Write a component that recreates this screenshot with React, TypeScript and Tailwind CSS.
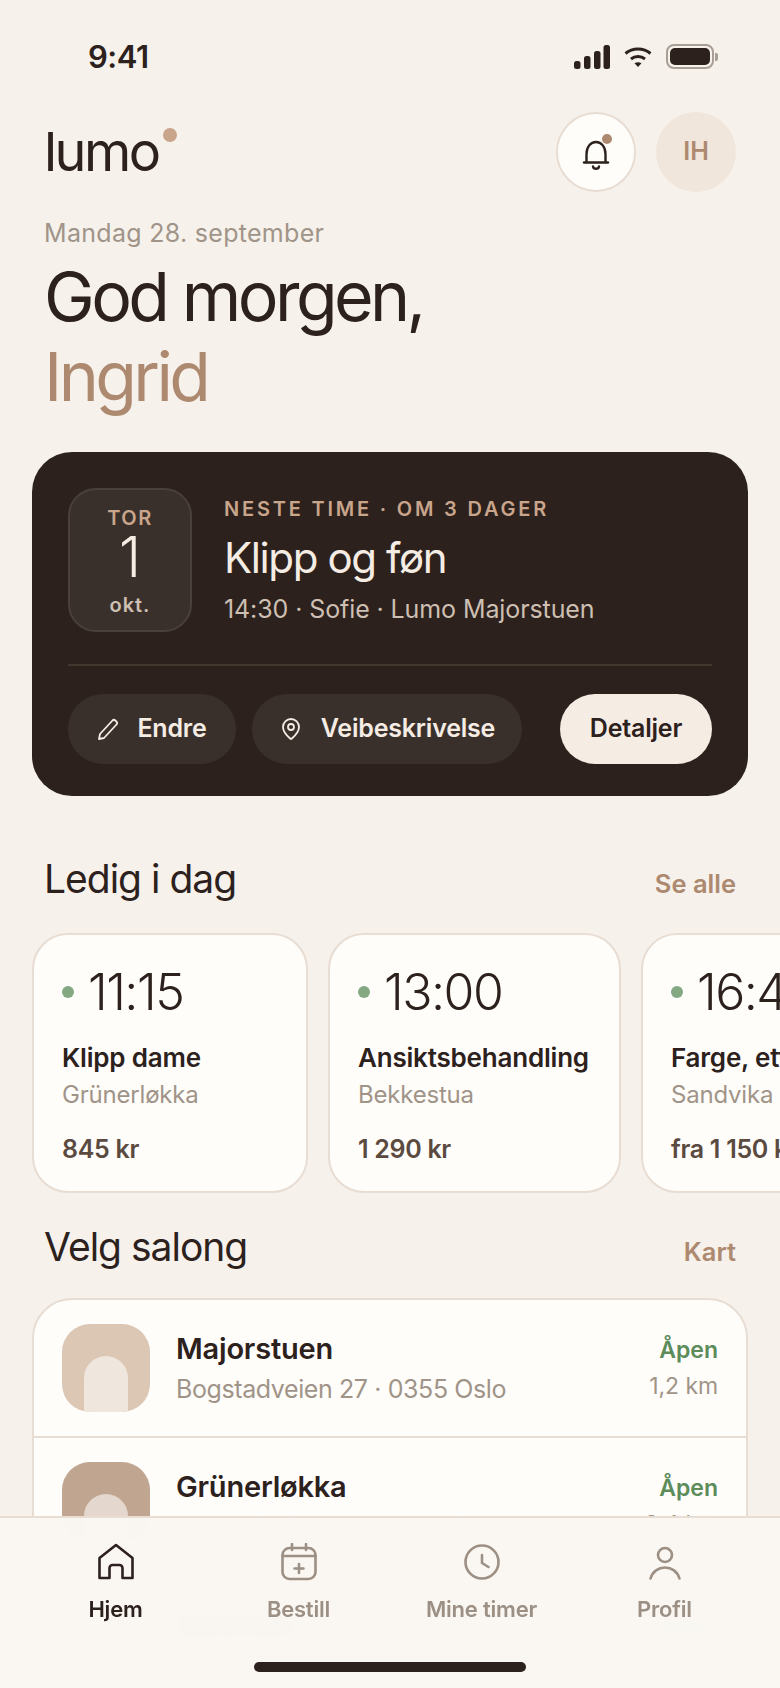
import { MapPin } from "lucide-react";

const slots = [
  { time: "11:15", name: "Klipp dame", place: "Grünerløkka", price: "845 kr", width: "w-[276px]" },
  { time: "13:00", name: "Ansiktsbehandling", place: "Bekkestua", price: "1 290 kr", width: "w-[293px]" },
  { time: "16:45", name: "Farge, etter avtale", place: "Sandvika", price: "fra 1 150 kr", width: "w-[292px]" },
];

const salons = [
  { name: "Majorstuen", address: "Bogstadveien 27 · 0355 Oslo", km: "1,2 km", thumb: "bg-[#dcc6b4]", arch: "bg-[#efe6de]" },
  { name: "Grünerløkka", address: "Thorvald Meyers gate 58", km: "3,4 km", thumb: "bg-[#c0a591]", arch: "bg-[#e3d7ce]" },
  { name: "Sentrum", address: "Gamle Aker 14", km: "5,2 km", thumb: "bg-[#dcc6b4]", arch: "bg-[#efe6de]" },
];

function StatusBar() {
  return (
    <div className="flex h-[112px] items-start justify-between pl-[88px] pr-[62px] pt-[39px]">
      <span className="text-[31px] leading-[36px] font-semibold tracking-[-0.5px] text-[#2c211c]">9:41</span>
      <div className="mt-[5px] flex items-center gap-[14px]">
        <svg width="36" height="24" viewBox="0 0 36 24" fill="#2c211c">
          <rect x="0" y="16" width="6.500" height="8" rx="2.5" />
          <rect x="10" y="11" width="6.500" height="13" rx="2.5" />
          <rect x="20" y="6" width="6.500" height="18" rx="2.5" />
          <rect x="29.500" y="0" width="6.500" height="24" rx="2.5" />
        </svg>
        <svg width="28" height="22" viewBox="0 0 28 22" fill="none" stroke="#2c211c" strokeWidth="3" strokeLinecap="butt">
          <path d="M1.500 7.500C8.500 1.500 19.500 1.500 26.500 7.500" />
          <path d="M7 13C11 9.800 17 9.800 21 13" />
          <path d="M14 21l-3.500-3.800c2-1.400 5-1.400 7 0z" fill="#2c211c" stroke="none" />
        </svg>
        <div className="flex items-center">
          <div className="flex h-[25px] w-[48px] items-center justify-center rounded-[8px] border-[2px] border-[#a89e95] p-[2px]">
            <div className="h-full w-full rounded-[5px] bg-[#2c211c]" />
          </div>
          <div className="ml-[1px] h-[8px] w-[3px] rounded-r-[2px] bg-[#a89e95]" />
        </div>
      </div>
    </div>
  );
}

function BellIcon() {
  return (
    <svg width="28" height="36" viewBox="0 0 28 36" fill="none" stroke="#2c211c" strokeWidth="2.4" strokeLinecap="round" strokeLinejoin="round">
      <path d="M4.500 28V20C4.500 13 8.500 8 14 8s9.500 5 9.500 12v8" />
      <path d="M2 28.500h24" />
      <path d="M11 32.500c.5 3 5.500 3 6 0" />
    </svg>
  );
}

function PencilIcon() {
  return (
    <svg width="22" height="22" viewBox="0 0 22 22" fill="none" stroke="#f5ece4" strokeWidth="1.8" strokeLinejoin="round">
      <path d="M15.500 2.500a2 2 0 0 1 2.800 0l1.200 1.200a2 2 0 0 1 0 2.800L7 20l-5 1 1-5z" />
    </svg>
  );
}

function Header() {
  return (
    <div className="flex items-center justify-between pl-[44px] pr-[44px]">
      <div className="relative text-[54px] leading-[60px] tracking-[-2.5px] text-[#2c211c]">
        lumo
        <span className="absolute -right-[18px] top-[6px] h-[14px] w-[14px] rounded-full bg-[#c9a58c]" />
      </div>
      <div className="flex gap-[20px]">
        <div className="relative flex h-[80px] w-[80px] items-center justify-center rounded-full border-[2px] border-[#e8ddd3] bg-[#fffdfa]">
          <BellIcon />
          <span className="absolute left-[44px] top-[20px] h-[10px] w-[10px] rounded-full bg-[#ad8970]" />
        </div>
        <div className="flex h-[80px] w-[80px] items-center justify-center rounded-full bg-[#f0e6dc] text-[25px] font-semibold text-[#ad8970]">
          IH
        </div>
      </div>
    </div>
  );
}

function NextCard() {
  return (
    <div className="mx-[32px] mt-[36px] h-[344px] rounded-[40px] bg-[#2c211c] px-[36px] pt-[36px]">
      <div className="flex gap-[32px]">
        <div className="flex h-[144px] w-[124px] flex-col items-center rounded-[28px] border-[2px] border-[#4a403a] bg-[#3a302b] pt-[16px]">
          <span className="text-[20px] leading-[24px] font-semibold tracking-[1.5px] text-[#c9a58c]">TOR</span>
          <span className="-mt-[1px] text-[56px] leading-[56px] font-light text-[#f5ece4]">1</span>
          <span className="mt-[8px] text-[20px] leading-[24px] font-semibold tracking-[1px] text-[#cdbfb2]">okt.</span>
        </div>
        <div className="pt-[9px]">
          <div className="text-[20px] leading-[24px] font-semibold tracking-[2.8px] text-[#c9a58c]">NESTE TIME · OM 3 DAGER</div>
          <div className="mt-[12px] text-[42px] leading-[50px] tracking-[-1.4px] text-[#f5ece4]">Klipp og føn</div>
          <div className="mt-[10px] text-[25px] leading-[32px] tracking-[-0.1px] text-[#cdbfb2]">14:30 · Sofie · Lumo Majorstuen</div>
        </div>
      </div>
      <div className="mt-[32px] h-[2px] bg-[#42372f]" />
      <div className="mt-[28px] flex items-center text-[25px] font-semibold tracking-[-0.2px]">
        <div className="flex h-[70px] w-[168px] items-center justify-center gap-[18px] rounded-full bg-[#3a302b] text-[#f5ece4]">
          <PencilIcon />
          Endre
        </div>
        <div className="ml-[16px] flex h-[70px] w-[270px] items-center justify-center gap-[18px] rounded-full bg-[#3a302b] text-[#f5ece4]">
          <MapPin size={24} strokeWidth={1.8} />
          Veibeskrivelse
        </div>
        <div className="ml-auto flex h-[70px] w-[152px] items-center justify-center rounded-full bg-[#f5ece4] text-[#2c211c]">
          Detaljer
        </div>
      </div>
    </div>
  );
}

function SectionHead({ title, link }: { title: string; link: string }) {
  return (
    <div className="flex items-center justify-between px-[44px]">
      <h2 className="text-[39px] leading-[46px] tracking-[-1px] text-[#2c211c]">{title}</h2>
      <span className="mt-[10px] text-[25.500px] font-semibold text-[#ad8970]">{link}</span>
    </div>
  );
}

function HomeIcon() {
  return (
    <svg width="38" height="38" viewBox="0 0 38 38" fill="none" stroke="#2c211c" strokeWidth="2.6" strokeLinejoin="round">
      <path d="M2.500 35V15L19 2l16.500 13v20H25.500V25a3 3 0 0 0-3-3h-7a3 3 0 0 0-3 3v10z" />
    </svg>
  );
}

function CalendarIcon() {
  return (
    <svg width="38" height="38" viewBox="0 0 38 38" fill="none" stroke="#9c8f84" strokeWidth="2.6" strokeLinecap="round" strokeLinejoin="round">
      <rect x="2.500" y="5" width="33" height="31" rx="7" />
      <path d="M2.500 13h33M12 1v6M26 1v6M19 21v9M14.500 25.500h9" />
    </svg>
  );
}

function ClockIcon() {
  return (
    <svg width="38" height="38" viewBox="0 0 38 38" fill="none" stroke="#9c8f84" strokeWidth="2.6" strokeLinecap="round" strokeLinejoin="round">
      <circle cx="19" cy="19" r="16.500" />
      <path d="M19 12v8l6.500 4" />
    </svg>
  );
}

function UserIcon() {
  return (
    <svg width="38" height="38" viewBox="0 0 38 38" fill="none" stroke="#9c8f84" strokeWidth="2.6" strokeLinecap="round" strokeLinejoin="round">
      <circle cx="19" cy="12" r="7" />
      <path d="M4.500 35.500c2-7 8-11 14.500-11s12.500 4 14.500 11" />
    </svg>
  );
}

function BottomNav() {
  const tabs = [
    { label: "Hjem", icon: <HomeIcon />, active: true },
    { label: "Bestill", icon: <CalendarIcon />, active: false },
    { label: "Mine timer", icon: <ClockIcon />, active: false },
    { label: "Profil", icon: <UserIcon />, active: false },
  ];

  return (
    <div className="absolute inset-x-0 bottom-0 h-[172px] border-t-[2px] border-[#e8ddd3] bg-[#faf7f3]/[0.98] backdrop-blur-[8px]">
      <div className="grid grid-cols-4 px-[24px] pt-[25px]">
        {tabs.map((tab) => (
          <div key={tab.label} className="flex flex-col items-center">
            {tab.icon}
            <span className={`mt-[14px] text-[22px] leading-[28px] font-semibold tracking-[-0.2px] ${tab.active ? "text-[#2c211c]" : "text-[#9c8f84]"}`}>
              {tab.label}
            </span>
          </div>
        ))}
      </div>
      <div className="absolute bottom-[16px] left-[254px] h-[10px] w-[272px] rounded-full bg-[#2c211c]" />
    </div>
  );
}

export default function App() {
  return (
    <div className="relative h-[1688px] w-[780px] overflow-hidden bg-[#f6f1eb] font-['Inter',sans-serif]">
      <StatusBar />
      <Header />
      <div className="mt-[26px] px-[44px]">
        <div className="text-[25px] leading-[30px] tracking-[0.3px] text-[#a09488]">Mandag 28. september</div>
        <h1 className="mt-[8px] text-[68px] leading-[80px] tracking-[-3.6px] text-[#2c211c]">
          God morgen,
          <br />
          <span className="text-[#ad8970]">Ingrid</span>
        </h1>
      </div>

      <NextCard />

      <div className="mt-[59px]">
        <SectionHead title="Ledig i dag" link="Se alle" />
      </div>
      <div className="mt-[30px] flex gap-[20px] pl-[32px]">
        {slots.map((slot) => (
          <div key={slot.time} className={`h-[260px] shrink-0 rounded-[36px] border-[2px] border-[#e8ddd3] bg-[#fffdfa] px-[28px] pt-[30px] ${slot.width}`}>
            <div className="flex items-center gap-[14px]">
              <span className="h-[12px] w-[12px] rounded-full bg-[#84a882]" />
              <span className="text-[50px] leading-[54px] font-[350] tracking-[-1.5px] text-[#2c211c]">{slot.time}</span>
            </div>
            <div className="mt-[23px] whitespace-nowrap text-[26px] leading-[32px] font-semibold tracking-[-0.2px] text-[#2c211c]">{slot.name}</div>
            <div className="mt-[6px] whitespace-nowrap text-[24px] leading-[30px] tracking-[-0.2px] text-[#a09488]">{slot.place}</div>
            <div className="mt-[24px] whitespace-nowrap text-[25px] leading-[30px] font-semibold tracking-[-0.3px] text-[#5a4a40]">{slot.price}</div>
          </div>
        ))}
      </div>

      <div className="mt-[30px]">
        <SectionHead title="Velg salong" link="Kart" />
      </div>
      <div className="mx-[32px] mt-[26px] rounded-[40px] border-[2px] border-[#e8ddd3] bg-[#fffdfa]">
        {salons.map((salon, index) => (
          <div key={salon.name} className={`flex items-start px-[28px] pt-[24px] ${index > 0 ? "h-[138px] border-t-[2px] border-[#e8ddd3]" : "h-[136px]"}`}>
            <div className={`flex h-[88px] w-[88px] shrink-0 items-end justify-center overflow-hidden rounded-[28px] ${salon.thumb}`}>
              <div className={`h-[56px] w-[44px] rounded-t-full ${salon.arch}`} />
            </div>
            <div className="ml-[26px] flex-1 pt-[8px]">
              <div className="text-[29px] leading-[34px] font-semibold tracking-[-0.2px] text-[#2c211c]">{salon.name}</div>
              <div className="mt-[7px] text-[25px] leading-[32px] tracking-[-0.4px] text-[#a09488]">{salon.address}</div>
            </div>
            <div className="pt-[11px] text-right">
              <div className="text-[23px] leading-[30px] font-semibold text-[#5b8c5a]">Åpen</div>
              <div className="mt-[7px] text-[23px] leading-[28px] tracking-[-0.1px] text-[#a09488]">{salon.km}</div>
            </div>
          </div>
        ))}
      </div>

      <BottomNav />
    </div>
  );
}
